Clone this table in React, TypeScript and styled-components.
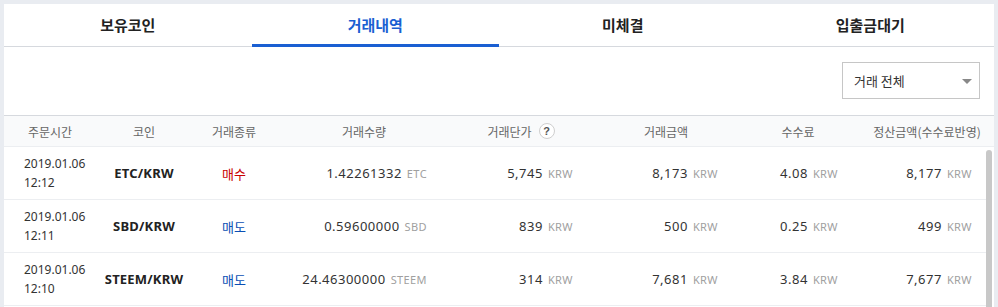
import React from "react";
import styled, { createGlobalStyle, css } from "styled-components";

const GlobalStyle = createGlobalStyle`
  html, body {
    margin: 0;
    padding: 0;
    overflow: hidden;
    background: #e9ecf1;
  }
  body {
    font-family: "Noto Sans", "Noto Sans CJK KR", sans-serif;
    color: #333;
  }
`;

const COLS = "92px 96px 84px 176px 138px 152px 112px 132px";

const Page = styled.div`
  padding: 4px 4px 0 4px;
`;

const Panel = styled.div`
  background: #fff;
  width: 990px;
`;

const TabBar = styled.div`
  display: grid;
  grid-template-columns: repeat(4, 1fr);
  border-bottom: 1px solid #d6d9de;
  height: 42px;
`;

const Tab = styled.div<{ $active?: boolean }>`
  display: flex;
  align-items: center;
  justify-content: center;
  height: 43px;
  margin-bottom: -1px;
  box-sizing: border-box;
  padding-top: 1px;
  font-family: "Noto Sans CJK KR", sans-serif;
  font-size: 15px;
  font-weight: 700;
  color: ${(p) => (p.$active ? "#1a5fd2" : "#222")};
  border-bottom: 3px solid ${(p) => (p.$active ? "#1a5fd2" : "transparent")};
`;

const FilterBar = styled.div`
  display: flex;
  justify-content: flex-end;
  padding: 15px 14px 16px 0;
`;

const Select = styled.div`
  width: 138px;
  height: 37px;
  box-sizing: border-box;
  border: 1px solid #c6c6c6;
  display: flex;
  align-items: center;
  justify-content: space-between;
  padding: 0 7px 0 11px;
  font-family: "Noto Sans CJK KR", sans-serif;
  font-size: 13px;
  color: #333;
`;

const Caret = styled.span`
  width: 0;
  height: 0;
  border-left: 5px solid transparent;
  border-right: 5px solid transparent;
  border-top: 5px solid #888;
  margin-top: 2px;
`;

const HeadRow = styled.div`
  display: grid;
  grid-template-columns: ${COLS};
  padding-right: 8px;
  height: 30px;
  background: #f9fafb;
  border-top: 1px solid #d6d9de;
  border-bottom: 1px solid #eceef1;
`;

const HeadCell = styled.div<{ $shift?: number }>`
  display: flex;
  align-items: center;
  justify-content: center;
  gap: 7px;
  padding-left: ${(p) => p.$shift ?? 0}px;
  font-family: "Noto Sans CJK KR", sans-serif;
  font-size: 12px;
  color: #666;
`;

const HelpIcon = styled.span`
  width: 16px;
  height: 16px;
  box-sizing: border-box;
  border: 1px solid #cfcfcf;
  border-radius: 50%;
  display: inline-flex;
  align-items: center;
  justify-content: center;
  font-family: "Liberation Sans", sans-serif;
  font-size: 11px;
  font-weight: 700;
  color: #555;
  background: #fff;
`;

const BodyWrap = styled.div`
  position: relative;
`;

const Body = styled.div`
  height: 160px;
  overflow-y: auto;
  scrollbar-width: none;
  &::-webkit-scrollbar {
    display: none;
  }
`;

const ScrollThumb = styled.div`
  position: absolute;
  top: 3px;
  right: 2px;
  width: 6px;
  height: 157px;
  background: #c8c8c8;
  border-radius: 3px 3px 0 0;
`;

const Row = styled.div`
  display: grid;
  grid-template-columns: ${COLS};
  width: 982px;
  height: 52px;
  border-bottom: 1px solid #eceef1;
`;

const Cell = styled.div<{ $align: "left" | "center" | "right"; $pad?: number }>`
  display: flex;
  align-items: center;
  white-space: nowrap;
  ${(p) =>
    p.$align === "left" &&
    css`
      justify-content: flex-start;
      padding-left: ${p.$pad ?? 0}px;
    `}
  ${(p) =>
    p.$align === "center" &&
    css`
      justify-content: center;
    `}
  ${(p) =>
    p.$align === "right" &&
    css`
      justify-content: flex-end;
      padding-right: ${p.$pad ?? 0}px;
    `}
`;

const DateText = styled.div`
  font-size: 12px;
  line-height: 19px;
  color: #333;
`;

const Coin = styled.span`
  font-size: 13px;
  font-weight: 700;
  color: #222;
  letter-spacing: 0.2px;
`;

const Side = styled.span<{ $buy?: boolean }>`
  font-family: "Noto Sans CJK KR", sans-serif;
  font-size: 13px;
  color: ${(p) => (p.$buy ? "#c80000" : "#0a4fb4")};
`;

const Num = styled.span`
  font-size: 13px;
  letter-spacing: 0.5px;
  color: #333;
`;

const Unit = styled.span`
  font-size: 11px;
  letter-spacing: 0.4px;
  color: #a0a0a0;
  margin-left: 5px;
`;

type Trade = {
  date: string;
  time: string;
  coin: string;
  sym: string;
  buy: boolean;
  qty: string;
  price: string;
  amount: string;
  fee: string;
  settle: string;
};

const trades: Trade[] = [
  { date: "2019.01.06", time: "12:12", coin: "ETC/KRW", sym: "ETC", buy: true, qty: "1.42261332", price: "5,745", amount: "8,173", fee: "4.08", settle: "8,177" },
  { date: "2019.01.06", time: "12:11", coin: "SBD/KRW", sym: "SBD", buy: false, qty: "0.59600000", price: "839", amount: "500", fee: "0.25", settle: "499" },
  { date: "2019.01.06", time: "12:10", coin: "STEEM/KRW", sym: "STEEM", buy: false, qty: "24.46300000", price: "314", amount: "7,681", fee: "3.84", settle: "7,677" },
];

const tabs = ["보유코인", "거래내역", "미체결", "입출금대기"];

export default function App() {
  return (
    <>
      <GlobalStyle />
      <Page>
        <Panel>
          <TabBar>
            {tabs.map((t, i) => (
              <Tab key={t} $active={i === 1}>
                {t}
              </Tab>
            ))}
          </TabBar>
          <FilterBar>
            <Select>
              <span>거래 전체</span>
              <Caret />
            </Select>
          </FilterBar>
          <HeadRow>
            <HeadCell>주문시간</HeadCell>
            <HeadCell>코인</HeadCell>
            <HeadCell>거래종류</HeadCell>
            <HeadCell>거래수량</HeadCell>
            <HeadCell>
              거래단가<HelpIcon>?</HelpIcon>
            </HeadCell>
            <HeadCell>거래금액</HeadCell>
            <HeadCell>수수료</HeadCell>
            <HeadCell $shift={14}>정산금액(수수료반영)</HeadCell>
          </HeadRow>
          <BodyWrap>
            <Body>
              {trades.map((r, i) => (
                <Row key={i}>
                  <Cell $align="left" $pad={20}>
                    <DateText>
                      {r.date}
                      <br />
                      {r.time}
                    </DateText>
                  </Cell>
                  <Cell $align="center">
                    <Coin>{r.coin}</Coin>
                  </Cell>
                  <Cell $align="center">
                    <Side $buy={r.buy}>{r.buy ? "매수" : "매도"}</Side>
                  </Cell>
                  <Cell $align="right" $pad={25}>
                    <Num>{r.qty}</Num>
                    <Unit>{r.sym}</Unit>
                  </Cell>
                  <Cell $align="right" $pad={17}>
                    <Num>{r.price}</Num>
                    <Unit>KRW</Unit>
                  </Cell>
                  <Cell $align="right" $pad={24}>
                    <Num>{r.amount}</Num>
                    <Unit>KRW</Unit>
                  </Cell>
                  <Cell $align="right" $pad={16}>
                    <Num>{r.fee}</Num>
                    <Unit>KRW</Unit>
                  </Cell>
                  <Cell $align="right" $pad={14}>
                    <Num>{r.settle}</Num>
                    <Unit>KRW</Unit>
                  </Cell>
                </Row>
              ))}
            </Body>
            <ScrollThumb />
          </BodyWrap>
        </Panel>
      </Page>
    </>
  );
}
